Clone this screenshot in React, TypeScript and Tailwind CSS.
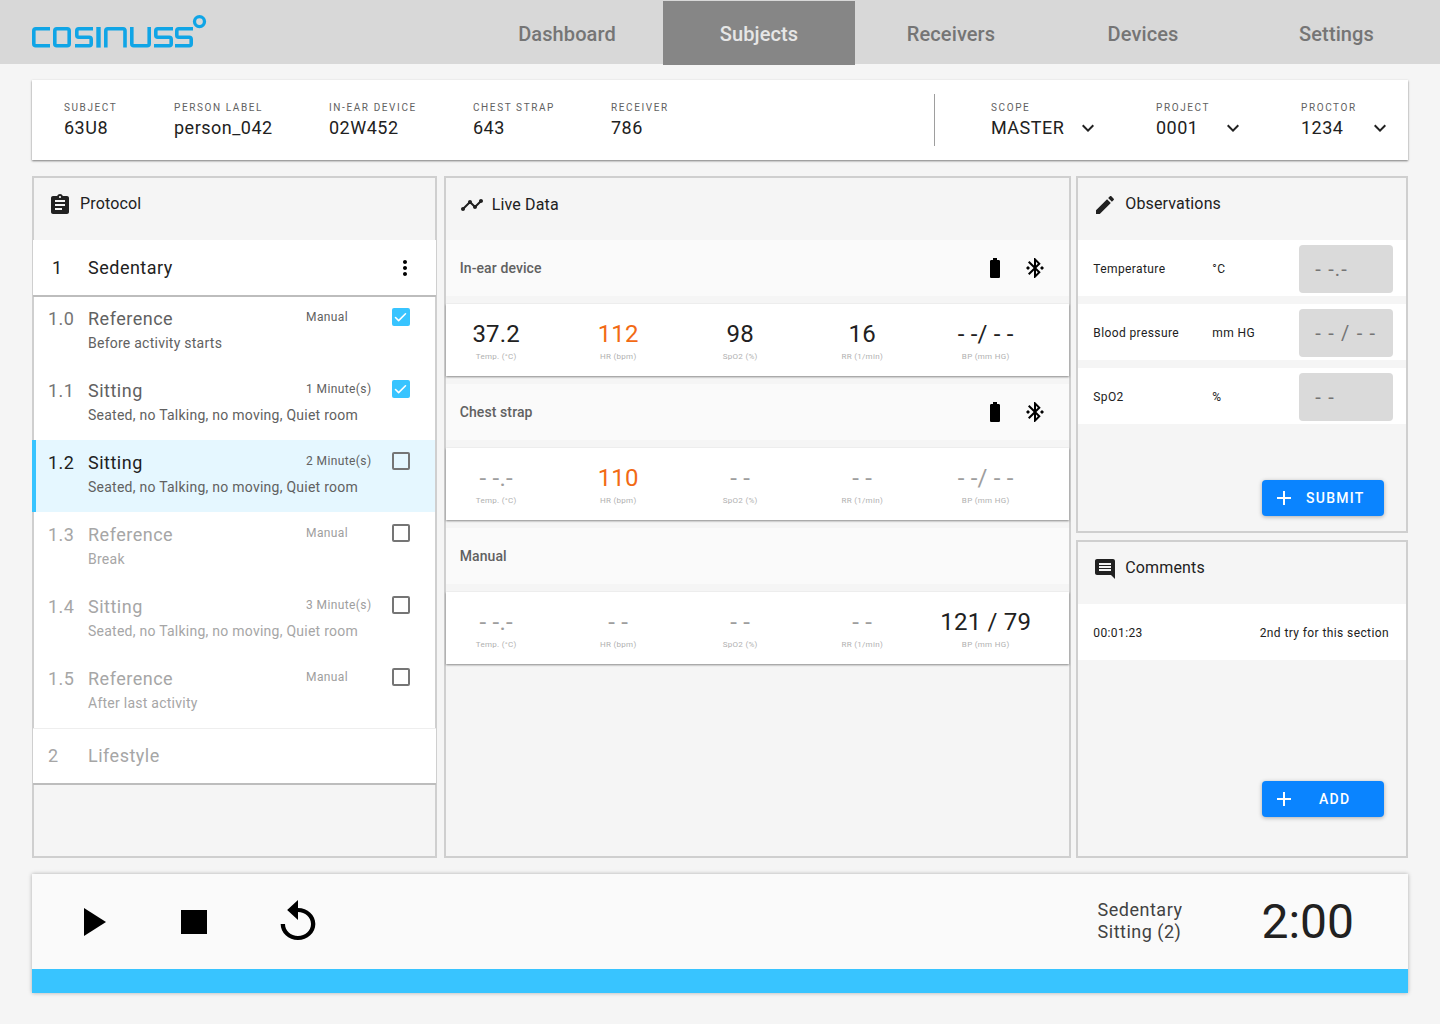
import React from "react";
import { Check } from "lucide-react";

const font = "font-['Roboto',sans-serif]";

function I({ d, size = 24, w, cls = "" }: { d: string; size?: number; w?: number; cls?: string }) {
  return (
    <svg
      width={w ?? size}
      height={size}
      viewBox="0 0 24 24"
      preserveAspectRatio={w ? "none" : undefined}
      fill="currentColor"
      className={`shrink-0 ${cls}`}
    >
      <path d={d} />
    </svg>
  );
}

const icons = {
  clipboard:
    "M19 3h-4.18C14.4 1.84 13.3 1 12 1c-1.3 0-2.4.84-2.82 2H5c-1.1 0-2 .9-2 2v14c0 1.1.9 2 2 2h14c1.1 0 2-.9 2-2V5c0-1.1-.9-2-2-2zm-7 0c.55 0 1 .45 1 1s-.45 1-1 1-1-.45-1-1 .45-1 1-1zm2 14H7v-2h7v2zm3-4H7v-2h10v2zm0-4H7V7h10v2z",
  line: "M23 8c0 1.1-.9 2-2 2-.18 0-.35-.02-.51-.07l-3.56 3.55c.05.16.07.34.07.52 0 1.1-.9 2-2 2s-2-.9-2-2c0-.18.02-.36.07-.52l-2.55-2.55c-.16.05-.34.07-.52.07s-.36-.02-.52-.07l-4.55 4.56c.05.16.07.33.07.51 0 1.1-.9 2-2 2s-2-.9-2-2 .9-2 2-2c.18 0 .35.02.51.07l4.56-4.55C8.02 9.36 8 9.18 8 9c0-1.1.9-2 2-2s2 .9 2 2c0 .18-.02.36-.07.52l2.55 2.55c.16-.05.34-.07.52-.07s.36.02.52.07l3.55-3.56C19.02 8.35 19 8.18 19 8c0-1.1.9-2 2-2s2 .9 2 2z",
  pencil:
    "M3 17.25V21h3.75L17.81 9.94l-3.75-3.75L3 17.25zM20.71 7.04c.39-.39.39-1.02 0-1.41l-2.34-2.34c-.39-.39-1.02-.39-1.41 0l-1.83 1.83 3.75 3.75 1.83-1.83z",
  comment:
    "M21.99 4c0-1.1-.89-2-1.99-2H4c-1.1 0-2 .9-2 2v12c0 1.1.9 2 2 2h14l4 4-.01-18zM18 14H6v-2h12v2zm0-3H6V9h12v2zm0-3H6V6h12v2z",
  battery:
    "M15.67 4H14V2h-4v2H8.33C7.6 4 7 4.6 7 5.33v15.33C7 21.4 7.6 22 8.33 22h7.33c.74 0 1.34-.6 1.34-1.33V5.33C17 4.6 16.4 4 15.67 4z",
  bluetooth:
    "M17.71 7.71L12 2h-1v7.59L6.41 5 5 6.41 10.59 12 5 17.59 6.41 19 11 14.41V22h1l5.71-5.71-4.3-4.29 4.3-4.29zM13 5.83l1.88 1.88L13 9.59V5.83zm1.88 10.46L13 18.17v-3.76l1.88 1.88zM5 10l-2 2 2 2 2-2-2-2zm14 0l-2 2 2 2 2-2-2-2z",
  chevron: "M7.41 8.59L12 13.17l4.59-4.58L18 10l-6 6-6-6 1.41-1.41z",
  dots:
    "M12 8c1.1 0 2-.9 2-2s-.9-2-2-2-2 .9-2 2 .9 2 2 2zm0 2c-1.1 0-2 .9-2 2s.9 2 2 2 2-.9 2-2-.9-2-2-2zm0 6c-1.1 0-2 .9-2 2s.9 2 2 2 2-.9 2-2-.9-2-2-2z",
  plus: "M19 13h-6v6h-2v-6H5v-2h6V5h2v6h6v2z",
  play: "M8 5v14l11-7z",
  stop: "M5.5 6h13v12h-13z",
  replay:
    "M12 5V1L7 6l5 5V7c3.31 0 6 2.69 6 6s-2.69 6-6 6-6-2.69-6-6H4c0 4.42 3.58 8 8 8s8-3.58 8-8-3.58-8-8-8z",
};

const sCurve = (x0: number, x1: number) =>
  `M${x1} 16.8H${x0 + 3.8}a2 2 0 0 0-2 2v4.5a2 2 0 0 0 2 2H${x1 - 3.8}a2 2 0 0 1 2 2v4.5a2 2 0 0 1-2 2H${x0}`;

function Logo() {
  return (
    <svg width="178" height="40" viewBox="0 0 178 40" className="ml-8 shrink-0" fill="none" stroke="#10a5e6" strokeWidth="3.6">
      <path d="M18 16.8H3.8a2 2 0 0 0-2 2V31.8a2 2 0 0 0 2 2H18" />
      <rect x="22.8" y="16.8" width="14.4" height="17" rx="2" />
      <path d={sCurve(43, 61)} />
      <path d="M66.5 15V35.6" strokeWidth="4.4" />
      <path d="M73.8 35.6V18.8a2 2 0 0 1 2-2H91a2 2 0 0 1 2 2V35.6" />
      <path d="M99.8 15V31.8a2 2 0 0 0 2 2H115.2a2 2 0 0 0 2-2V15" />
      <path d={sCurve(122, 141)} />
      <path d={sCurve(143, 161)} />
      <circle cx="167.5" cy="9.6" r="5" strokeWidth="3.3" />
    </svg>
  );
}

function NavTab({ label, active, cls = "" }: { label: string; active?: boolean; cls?: string }) {
  return (
    <div
      className={`w-[192px] h-[64px] pt-[2px] flex items-center justify-center text-[20px] font-medium tracking-[0.1px] ${cls} ${
        active ? "bg-[#868686] text-[#e6e6e6]" : "text-[#757575]"
      }`}
    >
      {label}
    </div>
  );
}

function Info({ label, value, cls }: { label: string; value: string; cls: string }) {
  return (
    <div className={cls}>
      <div className="text-[10px] leading-[14px] tracking-[1.6px] text-[#616161] uppercase">{label}</div>
      <div className="text-[18px] leading-[24px] tracking-[0.5px] text-[#212121] mt-[1px]">{value}</div>
    </div>
  );
}

function Select({ label, value, cls, gap }: { label: string; value: string; cls: string; gap: string }) {
  return (
    <div className={cls}>
      <div className="text-[10px] leading-[14px] tracking-[1.6px] text-[#616161] uppercase">{label}</div>
      <div className="flex items-center mt-[1px]">
        <span className={`text-[18px] leading-[24px] tracking-[0.5px] text-[#212121] ${gap}`}>{value}</span>
        <I d={icons.chevron} cls="text-[#212121]" />
      </div>
    </div>
  );
}

function PanelHead({ icon, title, cls = "", offset = "" }: { icon: string; title: string; cls?: string; offset?: string }) {
  return (
    <div className={`h-[62px] flex items-start pt-[15px] text-[#212121] ${cls}`}>
      <I d={icon} />
      <span className={`text-[16px] leading-[24px] tracking-[0.15px] ${offset}`}>{title}</span>
    </div>
  );
}

function Step({
  num,
  title,
  dur,
  desc,
  checked,
  active,
  dim,
}: {
  num: string;
  title: string;
  dur: string;
  desc: string;
  checked?: boolean;
  active?: boolean;
  dim?: boolean;
}) {
  return (
    <div
      className={`h-[72px] flex pt-[10px] pr-[25px] ${
        active ? "bg-[#e5f7ff] -ml-[2px] border-l-[4px] border-[#38c4ff] pl-[12px]" : "pl-[14px]"
      }`}
    >
      <div
        className={`w-[40px] shrink-0 mt-[1px] text-[18px] leading-[24px] tracking-[0.5px] ${
          active ? "text-[#212121]" : dim ? "text-[#a6a6a6]" : "text-[#757575]"
        }`}
      >
        {num}
      </div>
      <div className="flex-1 min-w-0">
        <div className="flex items-start">
          <div
            className={`w-[218px] shrink-0 mt-[1px] text-[18px] leading-[24px] tracking-[0.5px] ${
              dim ? "text-[#a6a6a6]" : active ? "text-[#212121]" : "text-[#616161]"
            }`}
          >
            {title}
          </div>
          <div className={`mt-[1px] text-[12px] leading-[20px] tracking-[0.4px] whitespace-nowrap ${dim ? "text-[#9e9e9e]" : "text-[#616161]"}`}>
            {dur}
          </div>
        </div>
        <div className={`text-[14px] leading-[20px] mt-[2px] tracking-[0.25px] whitespace-nowrap ${dim ? "text-[#a6a6a6]" : "text-[#616161]"}`}>
          {desc}
        </div>
      </div>
      <div className="w-[18px] h-[18px] shrink-0 mt-[2px]">
        {checked ? (
          <div className="w-[18px] h-[18px] rounded-[2px] bg-[#38c4ff] flex items-center justify-center">
            <Check size={15} strokeWidth={2.5} className="text-white" />
          </div>
        ) : (
          <div className="w-[18px] h-[18px] rounded-[2px] border-2 border-[#757575]" />
        )}
      </div>
    </div>
  );
}

function Metric({ value, label, orange, dim, cls = "" }: { value: string; label: string; orange?: boolean; dim?: boolean; cls?: string }) {
  return (
    <div className={`w-[122px] flex flex-col items-center ${cls}`}>
      <div
        className={`text-[24px] leading-[32px] tracking-[0.2px] whitespace-nowrap ${
          orange ? "text-[#f26a14]" : dim ? "text-[#9e9e9e]" : "text-[#212121]"
        }`}
      >
        {value}
      </div>
      <div className="text-[8px] leading-[12px] tracking-[0.3px] text-[#b0b0b0] mt-[1px]">{label}</div>
    </div>
  );
}

function DataRow({ values, orangeIdx, dimBlank }: { values: string[]; orangeIdx?: number; dimBlank?: boolean }) {
  const labels = ["Temp. (°C)", "HR (bpm)", "SpO2 (%)", "RR (1/min)", "BP (mm HG)"];
  return (
    <div className="h-[72px] bg-white shadow-[0_1px_2px_rgba(0,0,0,0.45)] flex pt-[14px]">
      <div className="flex ml-[-10.5px]">
        {values.map((v, i) => (
          <Metric
            key={i}
            value={v}
            label={labels[i]}
            orange={orangeIdx === i}
            dim={dimBlank && v.startsWith("- ")}
            cls={i === 4 ? "ml-[1.5px]" : ""}
          />
        ))}
      </div>
    </div>
  );
}

function Section({ title, showIcons }: { title: string; showIcons?: boolean }) {
  return (
    <div className="h-[56px] bg-[#fafafa] flex items-center justify-between pl-[14px] pr-[22px] mb-[8px]">
      <span className="text-[14px] font-medium tracking-[0.1px] text-[#616161]">{title}</span>
      {showIcons && (
        <div className="flex items-center gap-[16px]">
          <I d={icons.battery} />
          <I d={icons.bluetooth} />
        </div>
      )}
    </div>
  );
}

function ObsRow({ label, unit, value }: { label: string; unit: string; value: string }) {
  return (
    <div className="h-[56px] bg-white flex items-center pt-[2px] pl-[15px] mb-[8px]">
      <span className="w-[119px] text-[12px] tracking-[0.4px] text-[#212121]">{label}</span>
      <span className="w-[87px] text-[12px] tracking-[0.4px] text-[#212121]">{unit}</span>
      <div className="w-[94px] h-[48px] rounded-[4px] bg-[#dadada] flex items-center pl-[16px] text-[20px] tracking-[1.2px] text-[#757575] whitespace-nowrap">
        {value}
      </div>
    </div>
  );
}

function Btn({ label, cls }: { label: string; cls: string }) {
  return (
    <div className="w-[122px] h-[36px] rounded-[4px] bg-[#0a84ff] text-white shadow-[0_1px_4px_rgba(0,0,0,0.3)] flex items-center pl-[10px]">
      <I d={icons.plus} />
      <span className={`text-[14px] font-medium tracking-[1.25px] ${cls}`}>{label}</span>
    </div>
  );
}

export default function App() {
  return (
    <div className={`${font} w-[1440px] h-[1024px] bg-[#f5f5f5] overflow-hidden`}>
      <header className="h-[64px] bg-[#d8d8d8] flex items-center">
        <Logo />
        <div className="flex ml-[261px] mt-[1px] h-[64px]">
          <NavTab label="Dashboard" />
          <NavTab label="Subjects" active />
          <NavTab label="Receivers" />
          <NavTab label="Devices" />
          <NavTab label="Settings" cls="pl-[3px]" />
        </div>
      </header>

      <div className="mx-[32px] mt-[16px] h-[80px] bg-white shadow-[0_1px_2px_rgba(0,0,0,0.5)] flex items-center pl-[32px]">
        <Info label="Subject" value="63U8" cls="w-[110px]" />
        <Info label="Person label" value="person_042" cls="w-[155px]" />
        <Info label="In-ear device" value="02W452" cls="w-[144px]" />
        <Info label="Chest strap" value="643" cls="w-[138px]" />
        <Info label="Receiver" value="786" cls="w-[323px]" />
        <div className="w-px h-[52px] bg-[#9e9e9e]" />
        <Select label="Scope" value="MASTER" cls="ml-[56px] w-[165px]" gap="mr-[12px]" />
        <Select label="Project" value="0001" cls="w-[145px]" gap="mr-[23px]" />
        <Select label="Proctor" value="1234" cls="" gap="mr-[25px]" />
      </div>

      <main className="mx-[32px] mt-[16px] h-[682px] flex">
        <section className="w-[405px] border-2 border-[#cfcfcf]">
          <PanelHead icon={icons.clipboard} title="Protocol" cls="pl-[14px]" offset="ml-[8px] -mt-[1px]" />
          <div className="relative h-[56px] bg-white -mx-[1px] border-b border-[#bdbdbd] shadow-[0_1px_0_#bdbdbd] flex items-center pl-[19px] pr-[19px]">
            <span className="w-[36px] text-[18px] tracking-[0.5px] text-[#212121]">1</span>
            <span className="flex-1 text-[18px] tracking-[0.5px] text-[#212121]">Sedentary</span>
            <I d={icons.dots} />
          </div>
          <div className="bg-white">
            <Step num="1.0" title="Reference" dur="Manual" desc="Before activity starts" checked />
            <Step num="1.1" title="Sitting" dur="1 Minute(s)" desc="Seated, no Talking, no moving, Quiet room" checked />
            <Step num="1.2" title="Sitting" dur="2 Minute(s)" desc="Seated, no Talking, no moving, Quiet room" active />
            <Step num="1.3" title="Reference" dur="Manual" desc="Break" dim />
            <Step num="1.4" title="Sitting" dur="3 Minute(s)" desc="Seated, no Talking, no moving, Quiet room" dim />
            <Step num="1.5" title="Reference" dur="Manual" desc="After last activity" dim />
          </div>
          <div className="h-[56px] bg-white -mx-[1px] border-t border-t-[#eeeeee] border-b border-b-[#bdbdbd] shadow-[0_1px_0_#bdbdbd] flex items-center pl-[15px] pb-[2px]">
            <span className="w-[40px] text-[18px] tracking-[0.5px] text-[#a6a6a6]">2</span>
            <span className="text-[18px] tracking-[0.5px] text-[#a6a6a6]">Lifestyle</span>
          </div>
        </section>

        <section className="w-[628px] ml-[7px] border-2 border-[#cfcfcf]">
          <PanelHead icon={icons.line} title="Live Data" cls="pl-[14px]" offset="ml-[8px]" />
          <Section title="In-ear device" showIcons />
          <DataRow values={["37.2", "112", "98", "16", "- -/ - -"]} orangeIdx={1} />
          <div className="h-[8px]" />
          <Section title="Chest strap" showIcons />
          <DataRow values={["- -.-", "110", "- -", "- -", "- -/ - -"]} orangeIdx={1} dimBlank />
          <div className="h-[8px]" />
          <Section title="Manual" />
          <DataRow values={["- -.-", "- -", "- -", "- -", "121 / 79"]} dimBlank />
        </section>

        <div className="w-[332px] ml-[5px] flex flex-col gap-[7px]">
          <section className="h-[357px] border-2 border-[#cfcfcf] flex flex-col">
            <PanelHead icon={icons.pencil} title="Observations" cls="pl-[15px]" offset="ml-[8px] -mt-[1px]" />
            <ObsRow label="Temperature" unit="°C" value="- -.-" />
            <ObsRow label="Blood pressure" unit="mm HG" value="- - / - -" />
            <ObsRow label="SpO2" unit="%" value="- -" />
            <div className="mt-[48px] mr-[22px] self-end">
              <Btn label="SUBMIT" cls="ml-[10px]" />
            </div>
          </section>
          <section className="flex-1 border-2 border-[#cfcfcf] flex flex-col">
            <PanelHead icon={icons.comment} title="Comments" cls="pl-[15px]" offset="ml-[8px] -mt-[1px]" />
            <div className="h-[56px] bg-white flex items-center justify-between pt-[2px] pl-[15px] pr-[17px] text-[12px] tracking-[0.4px] text-[#212121]">
              <span>00:01:23</span>
              <span>2nd try for this section</span>
            </div>
            <div className="mt-[121px] mr-[22px] self-end">
              <Btn label="ADD" cls="ml-[23px]" />
            </div>
          </section>
        </div>
      </main>

      <footer className="mx-[32px] mt-[16px] shadow-[0_0_4px_rgba(0,0,0,0.3)]">
        <div className="h-[95px] bg-[#fafafa] flex items-center pl-[36px] pr-[54px]">
          <I d={icons.play} size={48} cls="text-black" />
          <I d={icons.stop} size={48} cls="text-black ml-[54px]" />
          <I d={icons.replay} size={48} w={52} cls="text-black ml-[54px]" />
          <div className="ml-auto -mt-[2px] text-[18px] leading-[22px] tracking-[0.5px] text-[#424242]">
            <div>Sedentary</div>
            <div>Sitting (2)</div>
          </div>
          <div className="ml-[79px] text-[48px] leading-[56px] text-[#212121]">2:00</div>
        </div>
        <div className="h-[24px] bg-[#38c4ff]" />
      </footer>
    </div>
  );
}
